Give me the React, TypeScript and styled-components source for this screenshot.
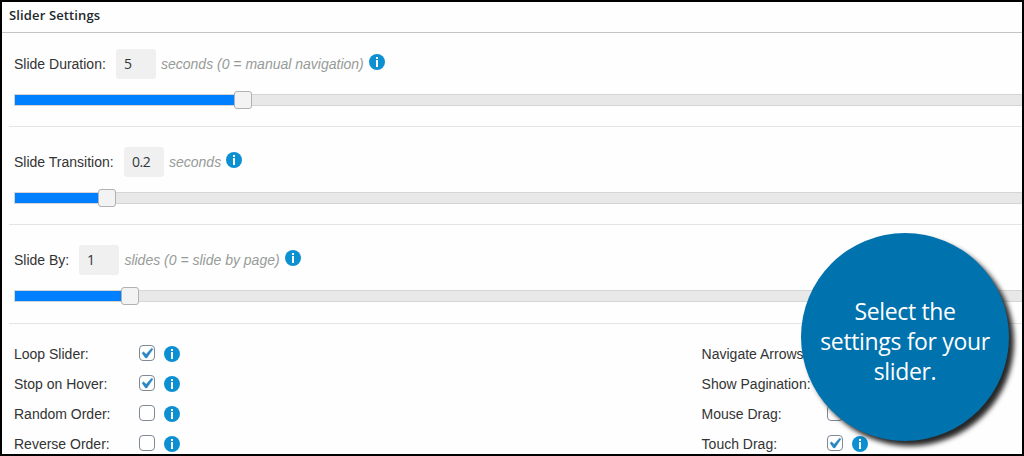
import React from 'react';
import styled, { createGlobalStyle } from 'styled-components';

interface SliderSetting {
  label: string;
  value: string;
  hint: string;
  labelWidth: number;
  position: number;
}

interface ToggleSetting {
  label: string;
  checked: boolean;
}

const sliders: SliderSetting[] = [
  { label: 'Slide Duration:', value: '5', hint: 'seconds (0 = manual navigation)', labelWidth: 102, position: 220 },
  { label: 'Slide Transition:', value: '0.2', hint: 'seconds', labelWidth: 110, position: 84 },
  { label: 'Slide By:', value: '1', hint: 'slides (0 = slide by page)', labelWidth: 65, position: 107 },
];

const leftToggles: ToggleSetting[] = [
  { label: 'Loop Slider:', checked: true },
  { label: 'Stop on Hover:', checked: true },
  { label: 'Random Order:', checked: false },
  { label: 'Reverse Order:', checked: false },
];

const rightToggles: ToggleSetting[] = [
  { label: 'Navigate Arrows:', checked: true },
  { label: 'Show Pagination:', checked: true },
  { label: 'Mouse Drag:', checked: false },
  { label: 'Touch Drag:', checked: true },
];

const GlobalStyle = createGlobalStyle`
  * {
    box-sizing: border-box;
  }

  body {
    margin: 0;
    background: #fff;
  }
`;

const Panel = styled.main`
  position: relative;
  width: 1024px;
  height: 456px;
  overflow: hidden;
  border: 2px solid #000;
  background: #fefefe;
  color: #333;
  font-family: "Liberation Sans", Arial, sans-serif;
  font-size: 14px;
`;

const PanelTitle = styled.h2`
  height: 31px;
  margin: 0;
  padding-left: 7px;
  border-bottom: 1px solid #c3c4c7;
  color: #23282d;
  font-family: "Open Sans", sans-serif;
  font-size: 13px;
  font-weight: 600;
  letter-spacing: 0.13px;
  line-height: 27px;
`;

const SliderRow = styled.section`
  height: 98px;
  margin-left: 7px;
  padding: 20px 0 0 5px;
  border-bottom: 1px solid #e5e5e5;

  &:first-of-type {
    height: 94px;
    padding-top: 16px;
  }

  &:last-of-type {
    height: 99px;
  }
`;

const Fields = styled.div`
  display: flex;
  align-items: center;
  height: 30px;
`;

const FieldLabel = styled.label<{ $width: number }>`
  flex: none;
  width: ${props => props.$width}px;
  white-space: nowrap;
`;

const ValueInput = styled.input`
  width: 40px;
  height: 30px;
  padding: 0 8px 2px;
  border: 0;
  border-radius: 3px;
  background: #f0f0f0;
  color: #32373c;
  font-family: "Open Sans", sans-serif;
  font-size: 14px;
  letter-spacing: -0.5px;
`;

const Hint = styled.em`
  margin: 0 5px;
  color: #969b98;
  white-space: nowrap;

  ${SliderRow}:last-of-type & {
    margin: 0 5.4px;
  }
`;

const Track = styled.div`
  display: flex;
  align-items: center;
  height: 12px;
  margin-top: 15px;
  border: 1px solid #d5d5d5;
  border-right: 0;
  background: #e8e8e8;
`;

const Fill = styled.div`
  height: 10px;
  background: #0080ff;
`;

const Thumb = styled.div`
  flex: none;
  width: 18px;
  height: 18px;
  margin-left: -1px;
  border: 1px solid #b0b0b6;
  border-radius: 3px;
  background: #f3f3f3;
`;

const ToggleGrid = styled.div`
  display: grid;
  grid-template-columns: 687.6px 1fr;
  padding: 15px 0 0 12px;
`;

const ToggleRow = styled.div`
  display: flex;
  align-items: center;
  height: 30px;
`;

const ToggleLabel = styled.label`
  width: 125px;
  white-space: nowrap;
`;

const CheckboxBox = styled.span`
  display: block;
  width: 16px;
  height: 16px;
  margin: -2px 9px 0 0;
  border: 1px solid #7e8993;
  border-radius: 4px;
  background: #fff;
`;

const CheckMark = styled.svg`
  display: block;
  width: 21px;
  height: 21px;
  margin: -3px 0 0 -4px;
  fill: #2a86c4;
  stroke: #2a86c4;
  stroke-width: 0.4;
`;

const InfoSvg = styled.svg<{ $raised?: boolean }>`
  flex: none;
  width: 16px;
  height: 16px;
  margin-top: ${props => (props.$raised ? '-5px' : '0')};
`;

const Callout = styled.aside`
  position: absolute;
  left: 799px;
  top: 231px;
  display: flex;
  align-items: center;
  justify-content: center;
  width: 208px;
  height: 208px;
  padding-top: 8px;
  border-radius: 50%;
  background: #0072ae;
  box-shadow: 5px 5px 5px rgba(0, 0, 0, 0.85);
  color: #fff;
  font-family: "Open Sans", sans-serif;
  font-size: 23px;
  letter-spacing: -0.35px;
  line-height: 30px;
  text-align: center;
`;

const InfoIcon: React.FC<{ raised?: boolean }> = ({ raised }) => (
  <InfoSvg viewBox="0 0 16 16" $raised={raised}>
    <circle cx="8" cy="8" r="8" fill="#0d90d1" />
    <rect x="7" y="3" width="2" height="2" fill="#fff" />
    <rect x="7" y="6" width="2" height="7" fill="#fff" />
  </InfoSvg>
);

const Toggle: React.FC<ToggleSetting> = ({ label, checked }) => (
  <ToggleRow>
    <ToggleLabel>{label}</ToggleLabel>
    <CheckboxBox>
      {checked && (
        <CheckMark viewBox="0 0 20 20">
          <path d="M14.83 4.89l1.34.94-5.81 8.38H9.02L5.78 9.67l1.34-1.25 2.57 2.4z" />
        </CheckMark>
      )}
    </CheckboxBox>
    <InfoIcon />
  </ToggleRow>
);

const App: React.FC = () => {
  return (
    <>
      <GlobalStyle />
      <Panel>
        <PanelTitle>Slider Settings</PanelTitle>

        {sliders.map((slider) => (
          <SliderRow key={slider.label}>
            <Fields>
              <FieldLabel $width={slider.labelWidth}>{slider.label}</FieldLabel>
              <ValueInput defaultValue={slider.value} />
              <Hint>{slider.hint}</Hint>
              <InfoIcon raised />
            </Fields>
            <Track>
              <Fill style={{ width: slider.position }} />
              <Thumb />
            </Track>
          </SliderRow>
        ))}

        <ToggleGrid>
          <div>
            {leftToggles.map((toggle) => <Toggle key={toggle.label} {...toggle} />)}
          </div>
          <div>
            {rightToggles.map((toggle) => <Toggle key={toggle.label} {...toggle} />)}
          </div>
        </ToggleGrid>

        <Callout>
          Select the<br />
          settings for your<br />
          slider.
        </Callout>
      </Panel>
    </>
  );
};

export default App;
